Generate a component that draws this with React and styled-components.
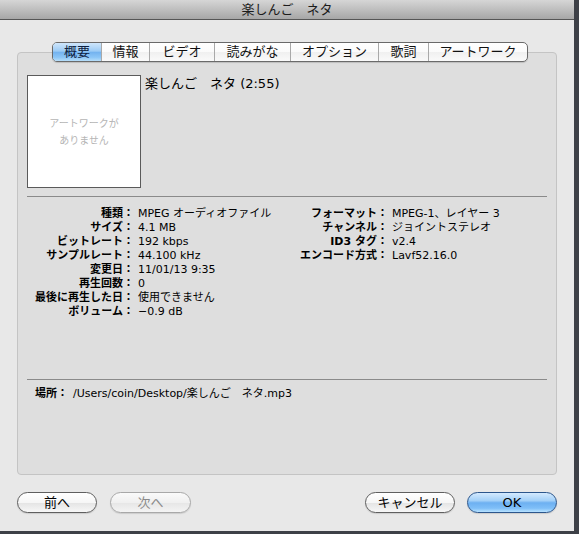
import React from "react";
import styled, { createGlobalStyle } from "styled-components";

const GlobalStyle = createGlobalStyle`
  html, body {
    margin: 0;
    padding: 0;
    background: #3d4047;
  }
  body {
    font-family: "DejaVu Sans", "Noto Sans CJK JP", sans-serif;
    color: #000;
  }
`;

const Window = styled.div`
  width: 574px;
  height: 531px;
  background: #e8e8e8;
  display: flex;
  flex-direction: column;
`;

const TitleBar = styled.div`
  height: 19px;
  border-bottom: 1px solid #555;
  background: linear-gradient(#d6d6d6, #bcbcbc 55%, #a6a6a6);
  display: flex;
  align-items: center;
  justify-content: center;
  font-size: 13px;
  color: #1c1c1c;
  line-height: 19px;
`;

const Content = styled.div`
  padding-top: 22px;
  display: flex;
  flex-direction: column;
`;

const TabRow = styled.div`
  padding-left: 52px;
  display: flex;
  position: relative;
  z-index: 1;
`;

const TabBar = styled.div`
  display: flex;
  height: 18px;
  border: 1px solid #6a6a6a;
  border-radius: 5px;
  overflow: hidden;
  background: linear-gradient(#ffffff, #fbfbfb 50%, #f0f0f0 51%, #fafafa);
  box-shadow: 0 1px 1px rgba(0, 0, 0, 0.15);
`;

const Tab = styled.div`
  width: ${(p) => p.w}px;
  box-sizing: border-box;
  display: flex;
  align-items: center;
  justify-content: center;
  font-size: 13px;
  line-height: 18px;
  border-left: ${(p) => (p.first ? "none" : "1px solid #a9a9a9")};
  background: ${(p) =>
    p.active
      ? "linear-gradient(#cfe6fb, #9ccbf5 45%, #74b3ef 52%, #8cc6f7 80%, #b7def9)"
      : "transparent"};
  color: ${(p) => (p.active ? "#0d2040" : "#111")};
`;

const Panel = styled.div`
  margin: -10px 17px 0;
  height: 423px;
  box-sizing: border-box;
  border: 1px solid #c4c4c4;
  border-radius: 4px;
  background: #dedede;
  padding: 22px 9px 0 9px;
  display: flex;
  flex-direction: column;
`;

const Header = styled.div`
  display: flex;
  gap: 4px;
`;

const Artwork = styled.div`
  width: 112px;
  height: 111px;
  flex-shrink: 0;
  border: 1px solid #5a5a5a;
  background: #fff;
  display: flex;
  flex-direction: column;
  align-items: center;
  justify-content: center;
  font-size: 10px;
  line-height: 17px;
  color: #b5b5b5;
`;

const SongTitle = styled.div`
  font-size: 13px;
  line-height: 16px;
  margin-top: 1px;
`;

const Separator = styled.div`
  height: 1px;
  flex-shrink: 0;
  background: #8a8a8a;
  margin-top: ${(p) => p.top}px;
`;

const InfoArea = styled.div`
  display: flex;
  margin-top: 10px;
  height: 112px;
  flex-shrink: 0;
`;

const InfoGrid = styled.div`
  display: grid;
  grid-template-columns: ${(p) => p.cols};
  column-gap: 4px;
  grid-auto-rows: 14px;
  align-content: start;
  font-size: 11px;
  line-height: 14px;
`;

const Label = styled.div`
  font-weight: bold;
  text-align: right;
  white-space: nowrap;
`;

const Value = styled.div`
  white-space: nowrap;
`;

const LocationRow = styled.div`
  display: flex;
  gap: 5px;
  margin-top: 7px;
  padding-left: 8px;
  font-size: 11px;
  line-height: 14px;
`;

const ButtonRow = styled.div`
  display: flex;
  justify-content: space-between;
  padding: 17px 17px 0;
`;

const ButtonGroup = styled.div`
  display: flex;
  gap: ${(p) => p.gap}px;
`;

const Button = styled.div`
  width: ${(p) => p.w}px;
  height: 19px;
  box-sizing: content-box;
  border-radius: 11px;
  border: 1px solid ${(p) => (p.primary ? "#2c568c" : p.disabled ? "#a8a8a8" : "#5f5f5f")};
  background: ${(p) =>
    p.primary
      ? "linear-gradient(#d4eafe, #a3d0f8 40%, #6db0f1 52%, #7fbff8 80%, #b8e2ff)"
      : p.disabled
      ? "linear-gradient(#fafafa, #f0f0f0 50%, #e6e6e6 52%, #f4f4f4)"
      : "linear-gradient(#ffffff, #f6f6f6 50%, #e4e4e4 52%, #f7f7f7)"};
  display: flex;
  align-items: center;
  justify-content: center;
  font-size: 13px;
  line-height: 19px;
  color: ${(p) => (p.disabled ? "#8a8a8a" : "#000")};
  box-shadow: 0 1px 1px rgba(0, 0, 0, 0.12);
`;

const tabs = [
  ["概要", 48],
  ["情報", 48],
  ["ビデオ", 65],
  ["読みがな", 76],
  ["オプション", 88],
  ["歌詞", 50],
  ["アートワーク", 99],
];

const leftInfo = [
  ["種類：", "MPEG オーディオファイル"],
  ["サイズ：", "4.1 MB"],
  ["ビットレート：", "192 kbps"],
  ["サンプルレート：", "44.100 kHz"],
  ["変更日：", "11/01/13 9:35"],
  ["再生回数：", "0"],
  ["最後に再生した日：", "使用できません"],
  ["ボリューム：", "−0.9 dB"],
];

const rightInfo = [
  ["フォーマット：", "MPEG-1、レイヤー 3"],
  ["チャンネル：", "ジョイントステレオ"],
  ["ID3 タグ：", "v2.4"],
  ["エンコード方式：", "Lavf52.16.0"],
];

const App = () => {
  return (
    <>
      <GlobalStyle />
      <Window>
        <TitleBar>楽しんご　ネタ</TitleBar>
        <Content>
          <TabRow>
            <TabBar>
              {tabs.map(([name, w], i) => (
                <Tab key={name} w={w} first={i === 0} active={i === 0}>
                  {name}
                </Tab>
              ))}
            </TabBar>
          </TabRow>
          <Panel>
            <Header>
              <Artwork>
                <div>アートワークが</div>
                <div>ありません</div>
              </Artwork>
              <SongTitle>楽しんご　ネタ (2:55)</SongTitle>
            </Header>
            <Separator top={8} />
            <InfoArea>
              <InfoGrid cols="107px 158px">
                {leftInfo.map(([l, v]) => (
                  <React.Fragment key={l}>
                    <Label>{l}</Label>
                    <Value>{v}</Value>
                  </React.Fragment>
                ))}
              </InfoGrid>
              <InfoGrid cols="92px 1fr">
                {rightInfo.map(([l, v]) => (
                  <React.Fragment key={l}>
                    <Label>{l}</Label>
                    <Value>{v}</Value>
                  </React.Fragment>
                ))}
              </InfoGrid>
            </InfoArea>
            <Separator top={60} />
            <LocationRow>
              <Label>場所：</Label>
              <Value>/Users/coin/Desktop/楽しんご　ネタ.mp3</Value>
            </LocationRow>
          </Panel>
          <ButtonRow>
            <ButtonGroup gap={13}>
              <Button w={78}>前へ</Button>
              <Button w={79} disabled>
                次へ
              </Button>
            </ButtonGroup>
            <ButtonGroup gap={12}>
              <Button w={88}>キャンセル</Button>
              <Button w={88} primary>
                OK
              </Button>
            </ButtonGroup>
          </ButtonRow>
        </Content>
      </Window>
    </>
  );
};

export default App;
